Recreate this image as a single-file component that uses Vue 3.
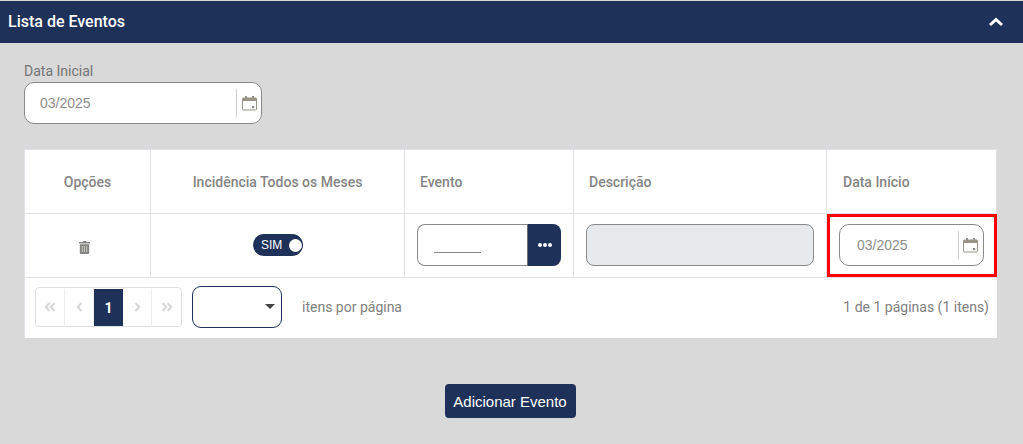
<script setup>
const columns = ['Opções', 'Incidência Todos os Meses', 'Evento', 'Descrição', 'Data Início']
</script>

<template>
  <div class="page">
    <header class="bar">
      <span class="bar-title">Lista de Eventos</span>
      <svg class="chevron" width="16" height="10" viewBox="0 0 16 10"><path d="M2 8 L8 2.5 L14 8" fill="none" stroke="#fff" stroke-width="3"/></svg>
    </header>
    <main class="body">
      <label class="field-label">Data Inicial</label>
      <div class="date date-top">
        <span class="date-value">03/2025</span>
        <span class="date-addon">
          <svg class="cal" width="15" height="15" viewBox="0 0 15 15"><path d="M3 0h2v2.5H3zM10 0h2v2.5h-2z" fill="#8f8f8f"/><rect x="0.5" y="2" width="14" height="3" fill="#9a9486"/><rect x="0.5" y="2" width="14" height="12" rx="1" fill="none" stroke="#98948a" stroke-width="1"/><rect x="10" y="10" width="2.2" height="2.2" fill="#8a8a8a"/></svg>
        </span>
      </div>

      <div class="table">
        <div class="row head">
          <div v-for="c in columns" :key="c" class="cell">{{ c }}</div>
        </div>
        <div class="row data">
          <div class="cell">
            <svg class="trash" width="11" height="13" viewBox="0 0 11 13"><path d="M4 0h3l.5 1H11v1.5H0V1h3.5zM.8 3.2h9.4V12a1 1 0 0 1-1 1H1.8a1 1 0 0 1-1-1z" fill="#858585"/><path d="M3.3 5v6M5.5 5v6M7.7 5v6" stroke="#c4c8bc" stroke-width="1"/></svg>
          </div>
          <div class="cell">
            <span class="toggle"><span class="toggle-text">SIM</span><span class="knob"></span></span>
          </div>
          <div class="cell">
            <div class="event">
              <div class="event-input"><span class="mask"></span></div>
              <button class="event-btn"><i></i><i></i><i></i></button>
            </div>
          </div>
          <div class="cell"><div class="desc"></div></div>
          <div class="cell flagged">
            <div class="date date-row">
              <span class="date-value">03/2025</span>
              <span class="date-addon">
                <svg class="cal" width="15" height="15" viewBox="0 0 15 15"><path d="M3 0h2v2.5H3zM10 0h2v2.5h-2z" fill="#8f8f8f"/><rect x="0.5" y="2" width="14" height="3" fill="#9a9486"/><rect x="0.5" y="2" width="14" height="12" rx="1" fill="none" stroke="#98948a" stroke-width="1"/><rect x="10" y="10" width="2.2" height="2.2" fill="#8a8a8a"/></svg>
              </span>
            </div>
          </div>
        </div>
        <div class="pager">
          <div class="pages">
            <span class="page-btn"><svg width="12" height="10" viewBox="0 0 12 10"><path d="M5.5 1 L1.8 5 L5.5 9M10.5 1 L6.8 5 L10.5 9" fill="none" stroke="#d6d6d6" stroke-width="2"/></svg></span>
            <span class="page-btn"><svg width="7" height="10" viewBox="0 0 7 10"><path d="M5.5 1 L1.8 5 L5.5 9" fill="none" stroke="#d6d6d6" stroke-width="2"/></svg></span>
            <span class="page-btn current">1</span>
            <span class="page-btn"><svg width="7" height="10" viewBox="0 0 7 10"><path d="M1.5 1 L5.2 5 L1.5 9" fill="none" stroke="#d6d6d6" stroke-width="2"/></svg></span>
            <span class="page-btn"><svg width="12" height="10" viewBox="0 0 12 10"><path d="M1.5 1 L5.2 5 L1.5 9M6.5 1 L10.2 5 L6.5 9" fill="none" stroke="#d6d6d6" stroke-width="2"/></svg></span>
          </div>
          <div class="select"><span class="caret"></span></div>
          <span class="per-page">itens por página</span>
          <span class="summary">1 de 1 páginas (1 itens)</span>
        </div>
      </div>

      <div class="actions">
        <button class="add">Adicionar Evento</button>
      </div>
    </main>
  </div>
</template>

<style>
html, body { margin: 0; background: #d9d9d9; }
</style>

<style scoped>
.page { width: 1023px; height: 444px; overflow: hidden; padding-top: 1px; box-sizing: border-box; background: #d9d9d9; font-family: Roboto, sans-serif; }
.bar { height: 42px; background: #1e3158; display: flex; align-items: center; justify-content: space-between; padding: 0 19px 0 8px; }
.bar-title { color: #fff; font-size: 16px; font-weight: 500; line-height: 41px; height: 42px; }
.body { padding: 20px 26px 0 24px; }
.field-label { display: block; color: #757575; font-size: 14px; line-height: 17px; margin-bottom: 2px; }
.date { display: flex; align-items: center; background: #fff; border: 1px solid #8a8a8a; border-radius: 10px; box-sizing: border-box; height: 42px; font-family: "Liberation Sans", Arial, sans-serif; color: #8e8e8e; font-size: 14px; }
.date-top { width: 238px; }
.date-row { width: 145px; margin-bottom: 1px; }
.date-value { flex: 1; padding-left: 15px; }
.date-row .date-value { padding-left: 17px; }
.date-addon { height: 28px; border-left: 1px solid #cfcfcf; display: flex; align-items: center; padding: 0 4px 0 5px; }
.date-row .date-addon { padding: 0 5px 0 4px; }
.cal { display: block; margin-top: 1px; }
.table { margin-top: 25px; width: 973px; background: #fff; border-top: 1px solid #e0e2e8; border-left: 1px solid #e0e2e8; box-sizing: border-box; }
.row { display: grid; grid-template-columns: 126px 254px 169px 253px 170px; border-bottom: 1px solid #e0e2e8; }
.cell { display: flex; align-items: center; justify-content: center; border-right: 1px solid #e0e2e8; position: relative; }
.head { height: 63px; color: #858585; font-size: 14px; font-weight: 500; }
.head .cell:nth-child(n+3) { justify-content: flex-start; padding-left: 15px; }
.head .cell:nth-child(5) { padding-left: 16px; }
.data { height: 63px; }
.trash { margin: 4px 6px 0 0; }
.toggle { width: 50px; height: 22px; margin-bottom: 1px; border-radius: 11px; background: #1e3158; display: flex; align-items: center; box-sizing: border-box; padding: 0 1px 0 8.5px; justify-content: space-between; }
.toggle-text { color: #fff; font: 12px "Liberation Sans", Arial, sans-serif; }
.knob { width: 13px; height: 13px; background: #fff; border-radius: 50%; }
.event { display: flex; width: 144px; height: 42px; margin-bottom: 1px; }
.event-input { flex: 1; background: #fff; border: 1px solid #8a8a8a; border-right: 0; border-radius: 8px 0 0 8px; position: relative; }
.mask { position: absolute; left: 16px; top: 27px; width: 47px; height: 1px; background: #8a8a8a; }
.event-btn { width: 34px; padding: 0; border: 0; border-left: 1px solid #6e6e6e; background: #1e3158; border-radius: 0 8px 8px 0; display: flex; align-items: center; justify-content: center; gap: 1px; }
.event-btn i { width: 4px; height: 4px; border-radius: 50%; background: #fff; }
.desc { width: 228px; height: 42px; margin-bottom: 1px; background: #e7eaed; border: 1px solid #8a8a8a; border-radius: 8px; box-sizing: border-box; }
.flagged { outline: 3px solid #f00; outline-offset: -3px; }
.pager { height: 60px; box-sizing: border-box; display: flex; align-items: center; padding: 0 8px 2px 10px; color: #808080; font-size: 14px; }
.pages { display: flex; height: 40px; border: 1px solid #e0e0e0; border-radius: 4px; box-sizing: border-box; }
.page-btn { width: 28px; margin: 1px 0; display: flex; align-items: center; justify-content: center; border-right: 1px solid #ececec; box-sizing: content-box; }
.page-btn:last-child { border-right: 0; width: 29px; }
.page-btn.current { background: #1e3158; color: #fff; font-weight: 700; font-size: 14px; border-right: 0; margin: 1px 0 0; width: 29px; }
.select { width: 90px; height: 42px; margin-left: 10px; border: 1px solid #1e3158; border-radius: 9px; box-sizing: border-box; position: relative; background: #fff; }
.caret { position: absolute; right: 6px; top: 17px; border: 5px solid transparent; border-top: 5px solid #444; border-left-width: 5.5px; border-right-width: 5.5px; border-bottom: 0; }
.per-page { margin-left: 20px; }
.summary { margin-left: auto; }
.actions { display: flex; justify-content: center; margin-top: 46px; padding-right: 1px; }
.add { height: 34px; width: 131px; padding: 0; border: 0; border-radius: 4px; background: #1e3158; color: #fff; font: 15px "Liberation Sans", Arial, sans-serif; }
</style>
